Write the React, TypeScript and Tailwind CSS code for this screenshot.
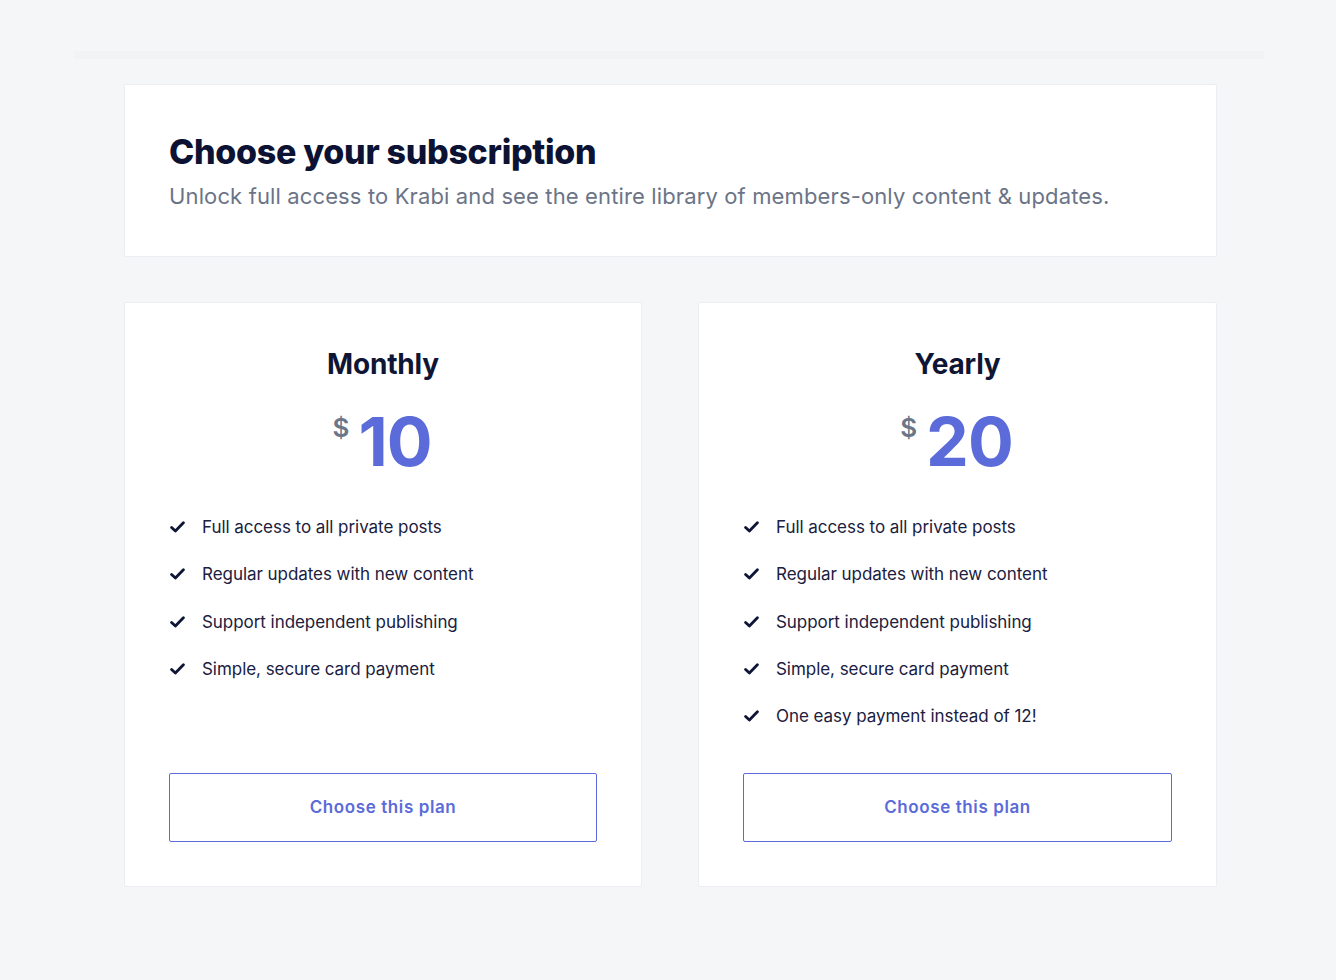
import React from 'react';

interface Plan {
  name: string;
  price: string;
  features: string[];
}

const plans: Plan[] = [
  {
    name: 'Monthly',
    price: '10',
    features: [
      'Full access to all private posts',
      'Regular updates with new content',
      'Support independent publishing',
      'Simple, secure card payment',
    ],
  },
  {
    name: 'Yearly',
    price: '20',
    features: [
      'Full access to all private posts',
      'Regular updates with new content',
      'Support independent publishing',
      'Simple, secure card payment',
      'One easy payment instead of 12!',
    ],
  },
];

const Check = () => (
  <svg className="w-[15px] h-[12px] shrink-0" viewBox="0 0 15 12" fill="none">
    <path d="M1.6 6.4 L5.4 10 L13.4 1.8" stroke="#0f1535" strokeWidth="2.8" strokeLinecap="round" strokeLinejoin="round" />
  </svg>
);

const PlanCard = ({ plan }: { plan: Plan }) => {
  return (
    <div className="flex flex-col bg-white border border-[#eceef2] rounded-[2px] px-[44px] pt-[44px] pb-[44px] h-[585px]">
      <h2 className="text-center text-[28px] leading-[34px] font-bold text-[#0f1535] tracking-[-0.2px]">
        {plan.name}
      </h2>
      <div className="mt-[26px] flex justify-center">
        <div className="flex items-start -translate-x-[1px]">
          <span className="text-[26px] leading-none font-semibold text-[#6b7789] mt-[8px] mr-[9px]">$</span>
          <span className="text-[68px] leading-none font-bold text-[#5b6bd9] tracking-[-1px]">{plan.price}</span>
        </div>
      </div>
      <ul className="mt-[40px] flex flex-col gap-[23.3px]">
        {plan.features.map((f) => (
          <li key={f} className="flex items-center gap-[17px] pl-[1px] text-[17px] leading-[24px] text-[#1a2040] tracking-[-0.05px]">
            <Check />
            <span>{f}</span>
          </li>
        ))}
      </ul>
      <button className="mt-auto h-[69px] w-full border-[1.5px] border-[#5b6bd9] rounded-[2px] text-[17px] font-semibold text-[#5b6bd9] tracking-[0.6px] bg-white">
        Choose this plan
      </button>
    </div>
  );
};

export default function App() {
  return (
    <div
      className="min-h-[980px] bg-[#f5f6f8] pt-[51px] pb-[94px]"
      style={{ fontFamily: 'Inter, "Noto Sans", sans-serif' }}
    >
      <div className="ml-[74px] w-[1190px] h-[8px] bg-[#f2f3f5]" />
      <div className="ml-[124px] w-[1093px] mt-[25px]">
        <div className="bg-white border border-[#eceef2] rounded-[2px] px-[44px] pt-[47px] pb-[45px]">
          <h1 className="text-[34px] leading-[40px] font-extrabold text-[#0b1233] tracking-[-0.3px]">
            Choose your subscription
          </h1>
          <p className="mt-[9px] text-[22px] leading-[30px] text-[#6b7487] tracking-[0.13px]">
            Unlock full access to Krabi and see the entire library of members-only content &amp; updates.
          </p>
        </div>
        <div className="mt-[45px] grid grid-cols-[518px_519px] gap-[56px]">
          {plans.map((p) => (
            <PlanCard key={p.name} plan={p} />
          ))}
        </div>
      </div>
    </div>
  );
}
